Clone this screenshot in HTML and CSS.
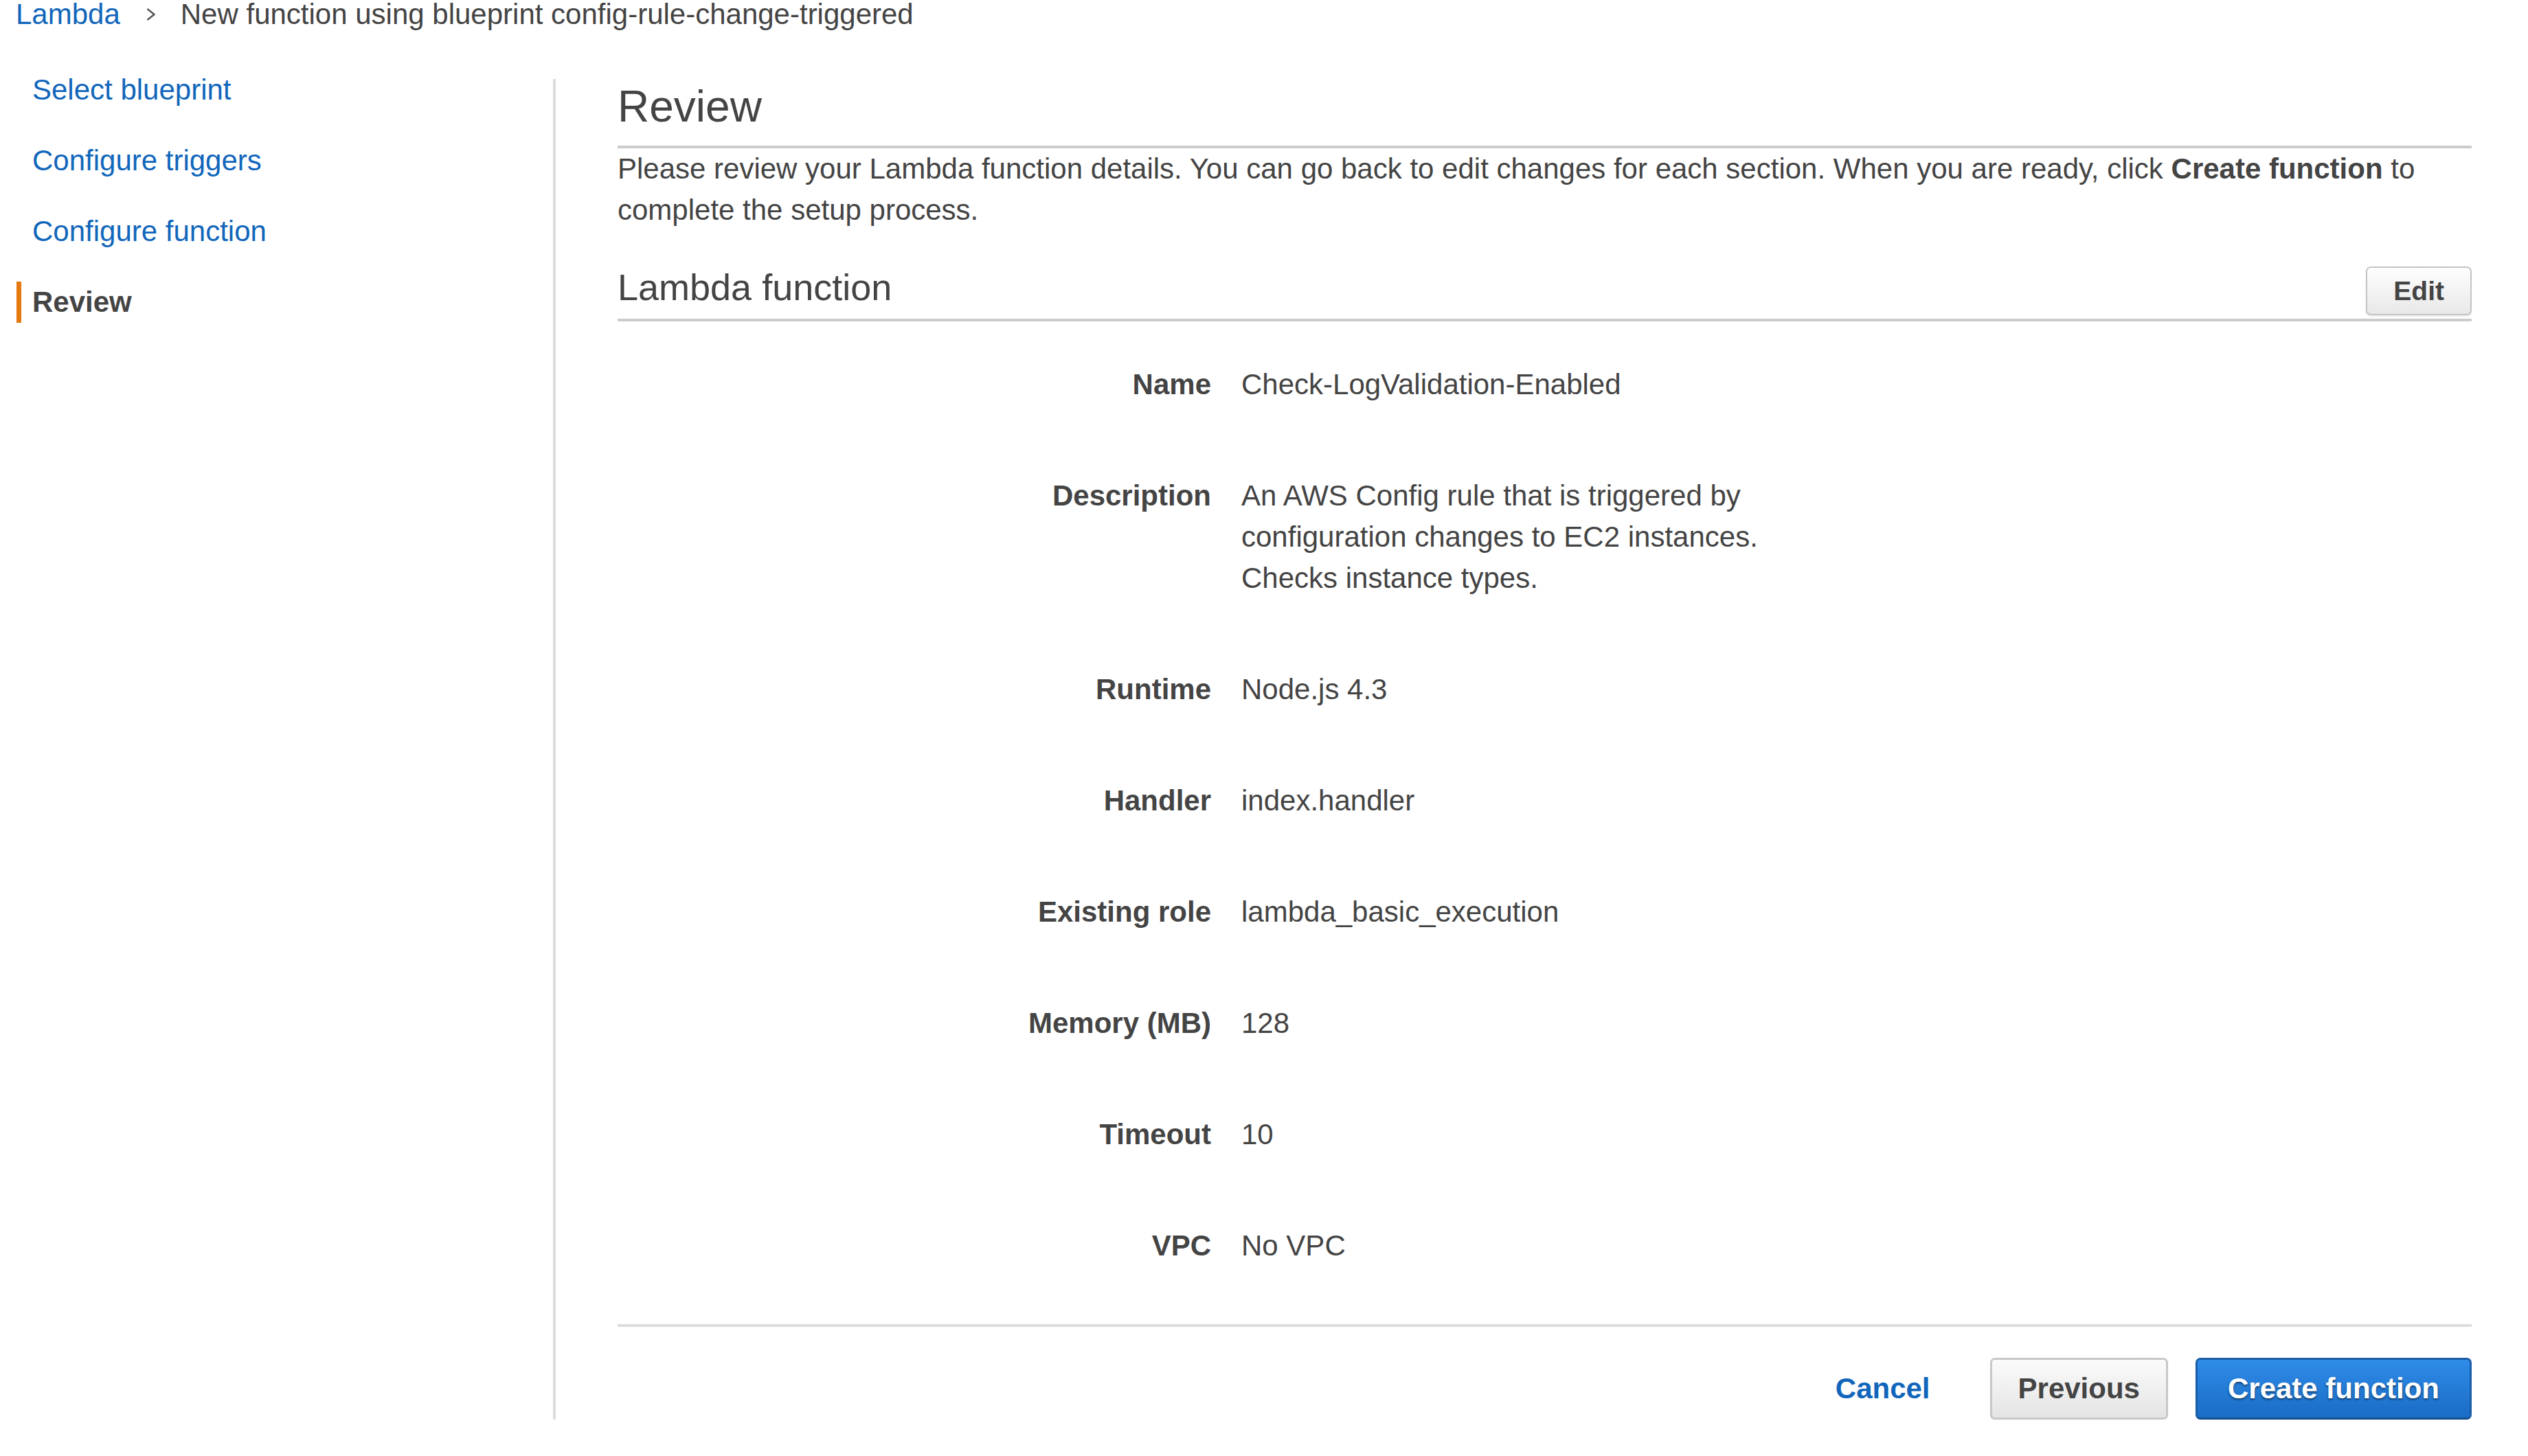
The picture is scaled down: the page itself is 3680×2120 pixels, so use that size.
FILE: index.html
```html
<!DOCTYPE html>
<html lang="en">
<head>
    <meta charset="UTF-8">
    <title>Lambda - Review</title>
    <link rel="stylesheet" href="styles.css">
</head>
<body>

    <div class="breadcrumb">
        <a href="#">Lambda</a>
        <svg class="crumb-sep" viewBox="0 0 16 24"><path d="M3 4 L13 12 L3 20" fill="none" stroke="#555" stroke-width="2.5"/></svg>
        <span>New function using blueprint config-rule-change-triggered</span>
    </div>

    <div class="layout">
        <nav class="steps">
            <a class="step" href="#">Select blueprint</a>
            <a class="step" href="#">Configure triggers</a>
            <a class="step" href="#">Configure function</a>
            <a class="step active" href="#">Review</a>
        </nav>

        <main class="content">
            <h1 class="page-title">Review</h1>
            <p class="intro">Please review your Lambda function details. You can go back to edit changes for each section. When you are ready, click <b>Create function</b> to complete the setup process.</p>

            <div class="section-head">
                <h2>Lambda function</h2>
                <button class="btn btn-edit" type="button">Edit</button>
            </div>

            <dl class="details">
                <div class="row"><dt>Name</dt><dd>Check-LogValidation-Enabled</dd></div>
                <div class="row"><dt>Description</dt><dd>An AWS Config rule that is triggered by configuration changes to EC2 instances. Checks instance types.</dd></div>
                <div class="row"><dt>Runtime</dt><dd>Node.js 4.3</dd></div>
                <div class="row"><dt>Handler</dt><dd>index.handler</dd></div>
                <div class="row"><dt>Existing role</dt><dd>lambda_basic_execution</dd></div>
                <div class="row"><dt>Memory (MB)</dt><dd>128</dd></div>
                <div class="row"><dt>Timeout</dt><dd>10</dd></div>
                <div class="row"><dt>VPC</dt><dd>No VPC</dd></div>
            </dl>

            <div class="actions">
                <button class="btn-link" type="button">Cancel</button>
                <button class="btn btn-default" type="button">Previous</button>
                <button class="btn btn-primary" type="button">Create function</button>
            </div>
        </main>
    </div>

</body>
</html>
```

FILE: styles.css
```css
body {
    margin: 0;
    font-family: "Liberation Sans", Arial, sans-serif;
    font-size: 42px;
    line-height: 60px;
    color: #444;
    background-color: #fff;
}

a {
    color: #1166bb;
    text-decoration: none;
}

.breadcrumb {
    height: 42px;
    line-height: 42px;
    padding-left: 23px;
    display: flex;
    align-items: center;
    white-space: nowrap;
}

.crumb-sep {
    width: 17px;
    height: 24px;
    margin: 0 35px 0 36px;
}

.layout {
    display: flex;
    margin-top: 44px;
}

.steps {
    width: 805px;
    flex-shrink: 0;
    padding-top: 15px;
}

.step {
    display: block;
    margin: 0 0 43px 24px;
    padding-left: 23px;
    line-height: 60px;
}

.step.active {
    border-left: 7px solid #e47911;
    padding-left: 16px;
    color: #444;
    font-weight: bold;
}

.content {
    flex: 1;
    margin-top: 29px;
    border-left: 4px solid #ddd;
    padding: 0 82px 0 90px;
}

.page-title {
    margin: 5px 0 0;
    padding-bottom: 22px;
    font-size: 64px;
    line-height: 70px;
    font-weight: normal;
    border-bottom: 4px solid #ccc;
}

.intro {
    margin: 0;
}

.section-head {
    display: flex;
    justify-content: space-between;
    align-items: center;
    margin-top: 52px;
    padding-bottom: 5px;
    border-bottom: 4px solid #ccc;
}

.section-head h2 {
    margin: 0;
    padding-bottom: 11px;
    font-size: 54px;
    line-height: 60px;
    font-weight: normal;
}

.btn {
    box-sizing: border-box;
    font-family: inherit;
    font-weight: bold;
    font-size: 42px;
    border-radius: 7px;
    cursor: pointer;
}

.btn-edit {
    height: 71px;
    padding: 0 38px;
    font-size: 39px;
    color: #444;
    border: 2px solid #c4c4c4;
    background: linear-gradient(#fefefe, #e8e8e8);
    box-shadow: 0 2px 2px rgba(0, 0, 0, 0.08);
}

.details {
    margin: 11px 0 0;
}

.row {
    display: grid;
    grid-template-columns: 864px 1fr;
    column-gap: 44px;
    padding: 51px 0;
}

.row dt {
    text-align: right;
    font-weight: bold;
}

.row dd {
    margin: 0;
    max-width: 800px;
}

.actions {
    display: flex;
    justify-content: flex-end;
    align-items: center;
    margin-top: 33px;
    padding-top: 45px;
    border-top: 4px solid #ddd;
}

.btn-link {
    padding: 0;
    margin-right: 87px;
    border: none;
    background: none;
    font-family: inherit;
    font-size: 42px;
    font-weight: bold;
    color: #1166bb;
    cursor: pointer;
}

.btn-default {
    height: 90px;
    padding: 0 38px;
    margin-right: 40px;
    color: #444;
    border: 3px solid #c8c8c8;
    background: linear-gradient(#fbfbfb, #e4e4e4);
    box-shadow: 0 2px 2px rgba(0, 0, 0, 0.06);
}

.btn-primary {
    height: 90px;
    padding: 0 44px;
    color: #fff;
    border: 3px solid #1a5ea8;
    border-bottom-color: #144f8f;
    background: linear-gradient(#2f8ce8, #1a6cc5);
    text-shadow: 0 2px 3px rgba(0, 0, 0, 0.5);
}
```
